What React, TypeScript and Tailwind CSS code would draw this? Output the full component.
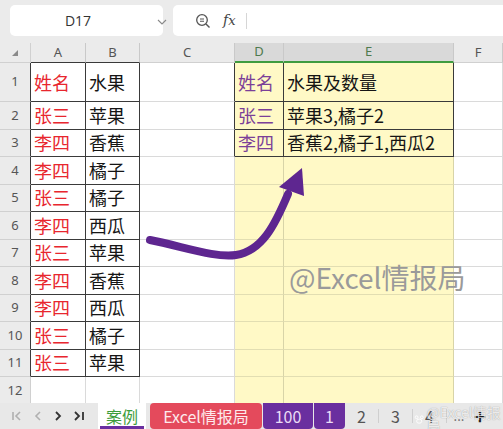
import React from 'react';

const CJK = "font-['Noto_Sans_CJK_SC','Noto_Sans',sans-serif]";

const colW = [55, 54, 95, 49, 170, 49];
const colNames = ['A', 'B', 'C', 'D', 'E', 'F'];

const colA = ['姓名', '张三', '李四', '李四', '张三', '李四', '张三', '李四', '李四', '张三', '张三'];
const colB = ['水果', '苹果', '香蕉', '橘子', '橘子', '西瓜', '苹果', '香蕉', '西瓜', '橘子', '苹果'];
const colD = ['姓名', '张三', '李四'];
const colE = ['水果及数量', '苹果3,橘子2', '香蕉2,橘子1,西瓜2'];

// r: 1-based row, c: 0-based column
function dark(r: number, c: number) {
  if (r >= 1 && r <= 11 && (c === 0 || c === 1)) return true;
  if (r >= 1 && r <= 3 && (c === 3 || c === 4)) return true;
  return false;
}

function cellText(r: number, c: number) {
  if (c === 0) return colA[r - 1];
  if (c === 1) return colB[r - 1];
  if (c === 3) return colD[r - 1];
  if (c === 4) return colE[r - 1];
  return undefined;
}

function Cell({ r, c }: { r: number; c: number }) {
  const darkR = dark(r, c) || dark(r, c + 1);
  const darkB = dark(r, c) || dark(r + 1, c);
  const yellow = c === 3 || c === 4;
  const text = cellText(r, c);
  const color =
    c === 0 ? 'text-[#e8262e]' : c === 3 ? 'text-[#7b3f98]' : 'text-[#151515]';
  return (
    <div
      className={[
        'flex items-center overflow-hidden whitespace-nowrap border-r border-b pl-[3px] text-[18px]',
        CJK,
        color,
        yellow ? 'bg-[#fff9c6]' : 'bg-white',
        darkR ? 'border-r-[#3a3a3a]' : yellow ? 'border-r-[#d8d4a8]' : 'border-r-[#dadada]',
        darkB ? 'border-b-[#3a3a3a]' : yellow ? 'border-b-[#e2deb2]' : 'border-b-[#dadada]',
      ].join(' ')}
    >
      {text}
    </div>
  );
}

function TopBar() {
  return (
    <div className="flex h-[43px] gap-[10px] bg-[#ebebeb] pl-[10px] pt-[5px]">
      <div className="relative flex h-[31px] w-[153px] items-center rounded-[5px] bg-white">
        <span className="w-[136px] text-center font-['Open_Sans',sans-serif] text-[14px] text-[#333]">D17</span>
        <svg width="10" height="6" viewBox="0 0 10 6" className="absolute left-[147px] top-[14px]">
          <path d="M1 1 L5 5 L9 1" fill="none" stroke="#888" strokeWidth="1.1" />
        </svg>
      </div>
      <div className="flex h-[31px] flex-1 items-center rounded-l-[5px] bg-white pl-[22px]">
        <svg width="16" height="16" viewBox="0 0 16 16">
          <circle cx="7" cy="7" r="5.3" fill="none" stroke="#555" strokeWidth="1.3" />
          <path d="M5 6 H9 M5 8.2 H9" stroke="#555" strokeWidth="1.1" />
          <path d="M11 11 L14.5 14.5" stroke="#555" strokeWidth="1.4" />
        </svg>
        <span className="ml-[12px] font-['DejaVu_Serif',serif] text-[14px] italic text-[#444]">
          f<span className="text-[13px]">x</span>
        </span>
        <div className="ml-[10px] h-[16px] w-px bg-[#d6d6d6]" />
      </div>
    </div>
  );
}

function Grid() {
  const rows = Array.from({ length: 12 }, (_, i) => i + 1);
  return (
    <div
      className="grid h-[360px] overflow-hidden"
      style={{ gridTemplateColumns: '31px 55px 54px 95px 49px 170px 49px', gridTemplateRows: '20px 39px repeat(11, 27.5px)' }}
    >
      <div className="relative border-r border-b border-[#d0d0d0] bg-[#ebebeb]">
        <svg width="7" height="7" viewBox="0 0 7 7" className="absolute left-[12px] top-[7px]">
          <path d="M6 0 L6 6 L0 6 Z" fill="#8a8a8a" />
        </svg>
      </div>
      {colNames.map((n, c) => {
        const sel = c === 3 || c === 4;
        return (
          <div
            key={n}
            className={[
              "flex items-center justify-center border-r border-r-[#c9c9c9] font-['Noto_Sans',sans-serif] text-[13px]",
              sel ? 'border-b-2 border-b-[#3f9b3f] bg-[#d9d9d9] text-[#4e7a4e]' : 'border-b bg-[#ebebeb] text-[#555]',
              !sel && (c === 0 || c === 1) ? 'border-b-[#3a3a3a]' : '',
              !sel && !(c === 0 || c === 1) ? 'border-b-[#d0d0d0]' : '',
            ].join(' ')}
            style={{ width: colW[c] }}
          >
            {n}
          </div>
        );
      })}
      {rows.map((r) => (
        <React.Fragment key={r}>
          <div
            className={[
              "flex items-center justify-center border-r border-b border-b-[#d0d0d0] bg-[#ebebeb] font-['Noto_Sans',sans-serif] text-[13px] text-[#555]",
              dark(r, 0) ? 'border-r-[#3a3a3a]' : 'border-r-[#d0d0d0]',
            ].join(' ')}
          >
            {r}
          </div>
          {colNames.map((_, c) => (
            <Cell key={c} r={r} c={c} />
          ))}
        </React.Fragment>
      ))}
    </div>
  );
}

function TabBar() {
  return (
    <div className={`flex h-[26px] items-end bg-[#e8e8e8] ${CJK}`}>
      <div className="flex h-[26px] w-[98px] items-center gap-[10px] pl-[11px]">
        <svg width="12" height="10" viewBox="0 0 12 10">
          <path d="M2 1 V9 M9 1 L5 5 L9 9" fill="none" stroke="#b0b0b0" strokeWidth="1.6" />
        </svg>
        <svg width="10" height="10" viewBox="0 0 10 10">
          <path d="M7 1 L3 5 L7 9" fill="none" stroke="#b0b0b0" strokeWidth="1.6" />
        </svg>
        <svg width="10" height="10" viewBox="0 0 10 10">
          <path d="M3 1 L7 5 L3 9" fill="none" stroke="#333" strokeWidth="1.8" />
        </svg>
        <svg width="12" height="10" viewBox="0 0 12 10">
          <path d="M2 1 L6 5 L2 9 M10 1 V9" fill="none" stroke="#333" strokeWidth="1.8" />
        </svg>
      </div>
      <div className="relative flex h-[26px] w-[48px] items-center justify-center bg-white text-[16px] text-[#3c9d3c]">
        案例
        <div className="absolute bottom-0 left-[2px] right-[2px] h-[3px] bg-[#6a2fa0]" />
      </div>
      <div className="ml-[4px] flex h-[26px] w-[112px] items-center justify-center rounded-[4px] bg-[#e44a5c] text-[16px] text-[#fde9ec]">
        Excel情报局
      </div>
      <div className="ml-px flex h-[26px] w-[50px] items-center justify-center rounded-b-[4px] bg-[#6a2f9f] text-[16px] text-[#eadcf6]">
        100
      </div>
      <div className="ml-px flex h-[26px] w-[31px] items-center justify-center rounded-b-[4px] bg-[#6a2f9f] text-[16px] text-[#eadcf6]">
        1
      </div>
      <div className="flex h-[26px] flex-1 items-center text-[16px] text-[#555]">
        <span className="w-[33px] text-center">2</span>
        <div className="h-[14px] w-px bg-[#cfcfcf]" />
        <span className="w-[33px] text-center">3</span>
        <div className="h-[14px] w-px bg-[#cfcfcf]" />
        <span className="w-[33px] text-center">4</span>
        <div className="h-[14px] w-px bg-[#cfcfcf]" />
        <span className="w-[24px] text-center text-[13px] text-[#666]">...</span>
        <span className="ml-[3px] text-[20px] font-bold text-[#222]">+</span>
      </div>
    </div>
  );
}

export default function App() {
  return (
    <div className="relative h-[429px] w-[503px] overflow-hidden bg-white">
      <TopBar />
      <Grid />
      <TabBar />

      <div className={`pointer-events-none absolute left-[289px] top-[263px] text-[28px] leading-none text-[#9a9a9a] ${CJK}`}>
        @Excel情报局
      </div>

      <svg className="pointer-events-none absolute left-0 top-0" width="503" height="429" viewBox="0 0 503 429">
        <path
          d="M150 240 C185 247 215 258 236 255 C262 251 275 225 288 194"
          fill="none"
          stroke="#5e2690"
          strokeWidth="8"
          strokeLinecap="round"
        />
        <path d="M302 168 L279 187 L304 196 Z" fill="#5e2690" />
      </svg>

      <div className={`pointer-events-none absolute left-[414px] top-[405px] flex items-center gap-[2px] text-[14px] leading-none text-white/80 ${CJK}`}>
        <svg width="12" height="12" viewBox="0 0 12 12">
          <circle cx="3" cy="4" r="1.6" fill="none" stroke="white" strokeWidth="1" />
          <circle cx="9" cy="4" r="1.6" fill="none" stroke="white" strokeWidth="1" />
          <ellipse cx="6" cy="8.5" rx="3" ry="2.4" fill="none" stroke="white" strokeWidth="1" />
        </svg>
        <span style={{ textShadow: '0 0 1px rgba(0,0,0,0.4)' }}>@Excel情报局</span>
      </div>
    </div>
  );
}
